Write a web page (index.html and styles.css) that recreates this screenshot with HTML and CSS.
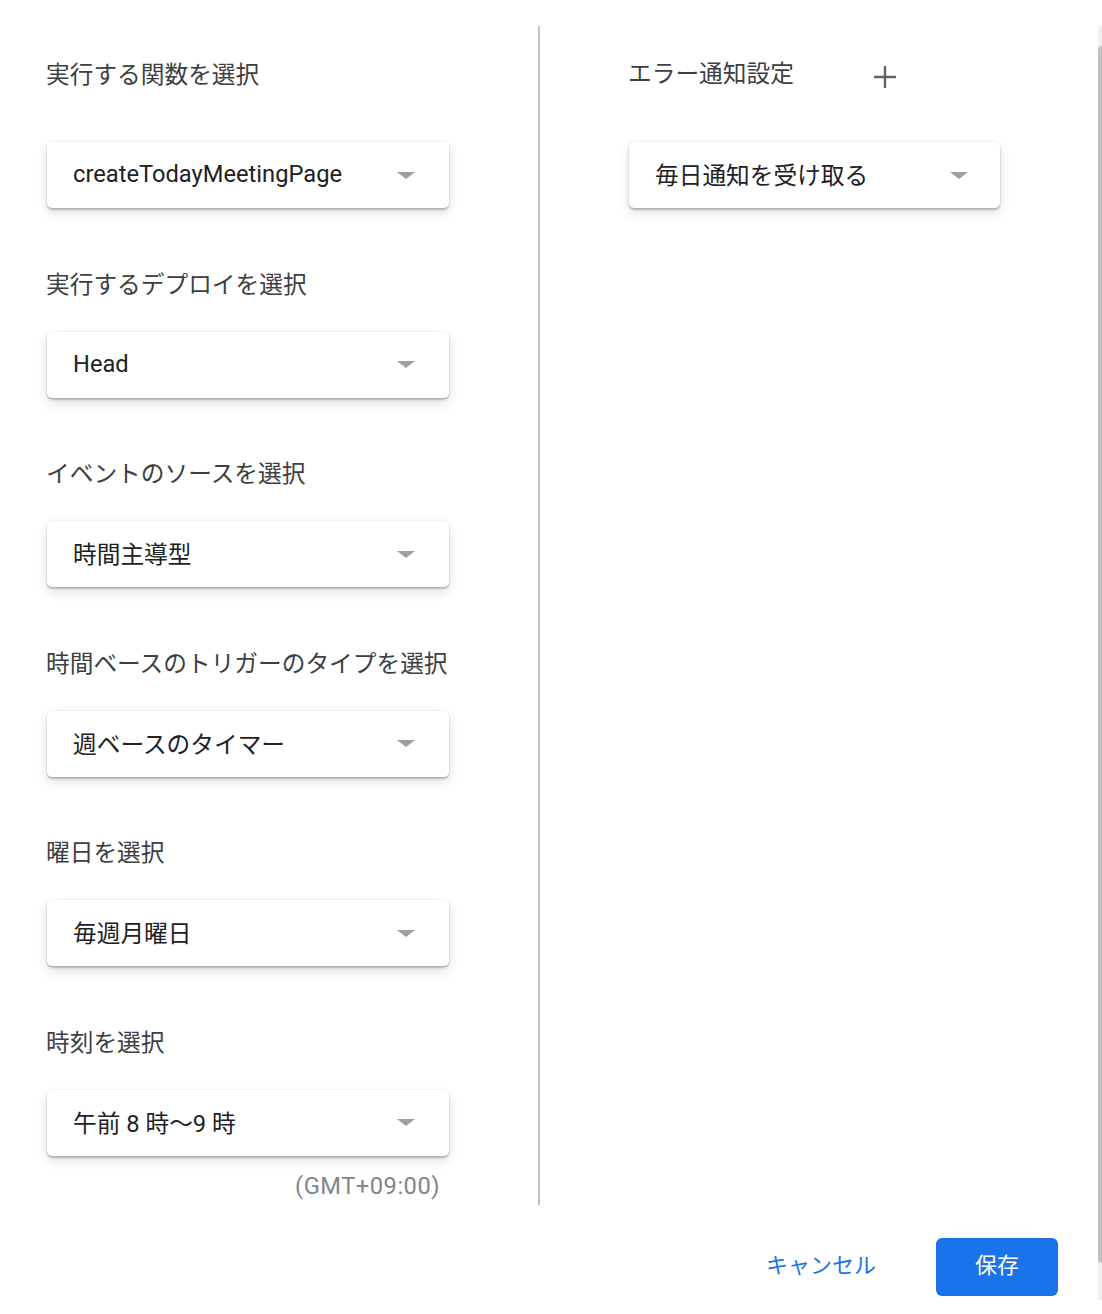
FILE: index.html
```html
<!DOCTYPE html>
<html lang="ja">
<head>
    <meta charset="UTF-8">
    <meta name="viewport" content="width=device-width, initial-scale=1.0">
    <title>トリガーを追加</title>
    <link rel="stylesheet" href="styles.css">
</head>
<body>
    <div class="page">
        <div class="dialog">
            <div class="columns">
                <div class="column column-left">
                    <div class="field">
                        <div class="field-label field-label-top">実行する関数を選択</div>
                        <div class="select">
                            <span class="select-value">createTodayMeetingPage</span>
                            <span class="select-arrow"></span>
                        </div>
                    </div>
                    <div class="field">
                        <div class="field-label">実行するデプロイを選択</div>
                        <div class="select">
                            <span class="select-value">Head</span>
                            <span class="select-arrow"></span>
                        </div>
                    </div>
                    <div class="field">
                        <div class="field-label">イベントのソースを選択</div>
                        <div class="select">
                            <span class="select-value">時間主導型</span>
                            <span class="select-arrow"></span>
                        </div>
                    </div>
                    <div class="field">
                        <div class="field-label">時間ベースのトリガーのタイプを選択</div>
                        <div class="select">
                            <span class="select-value">週ベースのタイマー</span>
                            <span class="select-arrow"></span>
                        </div>
                    </div>
                    <div class="field">
                        <div class="field-label">曜日を選択</div>
                        <div class="select">
                            <span class="select-value">毎週月曜日</span>
                            <span class="select-arrow"></span>
                        </div>
                    </div>
                    <div class="field">
                        <div class="field-label">時刻を選択</div>
                        <div class="select">
                            <span class="select-value">午前 8 時～9 時</span>
                            <span class="select-arrow"></span>
                        </div>
                        <div class="timezone">(GMT+09:00)</div>
                    </div>
                </div>

                <div class="divider"></div>

                <div class="column column-right">
                    <div class="field">
                        <div class="field-label field-label-top field-head">
                            <span>エラー通知設定</span>
                            <button class="icon-button" title="追加">
                                <svg width="24" height="24" viewBox="0 0 24 24">
                                    <path d="M12 1v22M1 12h22" stroke="#5f6368" stroke-width="2.4" fill="none"/>
                                </svg>
                            </button>
                        </div>
                        <div class="select select-narrow">
                            <span class="select-value">毎日通知を受け取る</span>
                            <span class="select-arrow"></span>
                        </div>
                    </div>
                </div>
            </div>

            <div class="footer">
                <button class="btn btn-text">キャンセル</button>
                <button class="btn btn-primary">保存</button>
            </div>
        </div>

        <div class="scrollbar">
            <div class="scrollbar-thumb"></div>
        </div>
    </div>
</body>
</html>
```

FILE: styles.css
```css
:root {
    --text-color: #3c4043;
    --value-color: #202124;
    --muted-color: #80868b;
    --divider-color: #bdc1c6;
    --blue: #1a73e8;
    --arrow-color: #9aa0a6;
}

body {
    margin: 0;
    background-color: white;
    font-family: Roboto, "Noto Sans CJK JP", sans-serif;
    color: var(--text-color);
}

.page {
    display: flex;
    height: 1314px;
}

.dialog {
    flex: 1;
    display: flex;
    flex-direction: column;
    padding: 26px 40px 0 0;
}

.columns {
    display: flex;
    height: 1179px;
}

.column {
    padding-top: 34px;
}

.column-left {
    width: 538px;
    flex-shrink: 0;
    padding-left: 46px;
    box-sizing: border-box;
}

.column-right {
    flex: 1;
    padding-left: 88px;
}

.divider {
    width: 2px;
    flex-shrink: 0;
    background-color: var(--divider-color);
}

.field + .field {
    margin-top: 61.5px;
}

.field-label {
    font-size: 23.7px;
    line-height: 30px;
    margin-bottom: 32px;
    padding-bottom: 2px;
    height: 28px;
    white-space: nowrap;
}

.field-label-top {
    margin-bottom: 52px;
}

.field-head {
    display: flex;
    align-items: center;
    gap: 78px;
}

.icon-button {
    background: none;
    border: none;
    padding: 6px 0 0;
    width: 26px;
    height: 30px;
    box-sizing: border-box;
    display: flex;
    align-items: center;
    justify-content: center;
    cursor: pointer;
}

.select {
    display: flex;
    align-items: center;
    justify-content: space-between;
    width: 402px;
    height: 66px;
    margin-left: 1px;
    padding: 0 34px 2px 26px;
    box-sizing: border-box;
    background-color: white;
    border-radius: 5px;
    box-shadow: 0 2px 2px rgba(0, 0, 0, 0.22), 0 0 2px rgba(0, 0, 0, 0.12), 0 5px 12px rgba(0, 0, 0, 0.12);
}

.select-narrow {
    width: 371px;
    padding-right: 32px;
}

.select-value {
    font-size: 23.7px;
    color: var(--value-color);
    white-space: nowrap;
}

.select-arrow {
    width: 0;
    height: 0;
    margin-top: 2px;
    border-left: 9px solid transparent;
    border-right: 9px solid transparent;
    border-top: 7px solid var(--arrow-color);
}

.timezone {
    width: 394px;
    margin-top: 15px;
    text-align: right;
    font-size: 23.7px;
    line-height: 30px;
    letter-spacing: 0.5px;
    color: var(--muted-color);
}

.footer {
    display: flex;
    justify-content: flex-end;
    align-items: center;
    gap: 36px;
    margin-top: 33px;
}

.btn {
    font-family: Roboto, "Noto Sans CJK JP", sans-serif;
    font-size: 22px;
    height: 58px;
    padding-bottom: 10px;
    border: none;
    border-radius: 6px;
    cursor: pointer;
}

.btn-text {
    background: none;
    color: var(--blue);
    padding-left: 24px;
    padding-right: 24px;
}

.btn-primary {
    background-color: var(--blue);
    color: white;
    width: 122px;
}

.scrollbar {
    width: 4px;
    margin: 26px 0 14px;
    padding-top: 20px;
    padding-bottom: 37px;
    background-color: #f1f1f1;
    display: flex;
}

.scrollbar-thumb {
    flex: 1;
    background-color: #c1c1c1;
    border-radius: 4px 0 0 4px;
}
```
